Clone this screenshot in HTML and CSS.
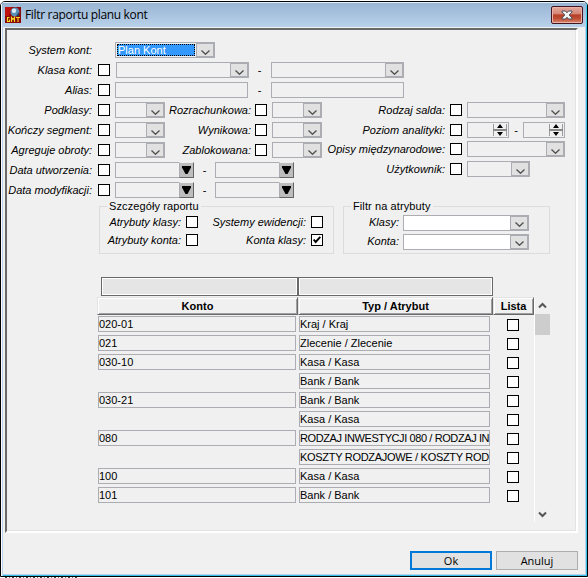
FILE: index.html
```html
<!DOCTYPE html>
<html lang="pl">
<head>
<meta charset="utf-8">
<title>Filtr raportu planu kont</title>
<link rel="stylesheet" href="styles.css">
</head>
<body>
<svg class="defs" width="0" height="0">
  <symbol id="chev" viewBox="0 0 9 5"><path d="M.5 .5 4.5 4.3 8.5 .5" fill="none" stroke="#505050" stroke-width="1.3"/></symbol>
  <symbol id="tri" viewBox="0 0 9 8"><path d="M0 0H9V1.500L5.500 8H3.500L0 1.500Z" fill="#000"/></symbol>
  <symbol id="spin" viewBox="0 0 16 14"><path d="M1.5 1V13M14.5 1V13" stroke="#9a9a9a"/><path d="M1 7H15" stroke="#888" stroke-width="2"/><path d="M8 1 11 5H5ZM8 13 5 9H11Z" fill="#000"/></symbol>
</svg>
<div class="window">
  <header class="titlebar">
    <svg class="app-icon" width="16" height="16" viewBox="0 0 16 16">
      <rect width="16" height="16" fill="#8c0808"/><path d="M0 0H7L4 9H0Z" fill="#c01010"/>
      <circle cx="10" cy="5" r="4.5" fill="#5c8fb8"/><circle cx="9" cy="3.8" r="2.2" fill="#d8ecf6"/><path d="M11 9 14 5V9Z" fill="#24455e"/>
      <path d="M4.5 10.5H2.5V14.5H4.5V12.5M6.5 15V10.5L8 12.5 9.500 10.500V15M11 10.500H15M13 10.500V15" fill="none" stroke="#f4dc20" stroke-width="1.100"/>
    </svg>
    <h1>Filtr raportu planu kont</h1>
    <button class="close" aria-label="Zamknij"><svg width="12" height="10" viewBox="0 0 12 10"><path d="M1 1H4.500L6 2.800 7.500 1H11V2L8.200 5 11 8V9H7.500L6 7.200 4.500 9H1V8L3.800 5 1 2Z" fill="#f4f4f4" stroke="#4b4f60"/></svg></button>
  </header>
  <main class="panel">
    <form class="filters">
      <div class="row"><label>System kont:</label><i></i>
        <div class="wide"><span class="combo w100"><span class="selected">Plan Kont</span><b><svg><use href="#chev"/></svg></b></span></div></div>
      <div class="row"><label>Klasa kont:</label><i class="check"></i>
        <div class="wide"><span class="combo w133 shift"><b><svg><use href="#chev"/></svg></b></span><em>-</em><span class="combo w133"><b><svg><use href="#chev"/></svg></b></span></div></div>
      <div class="row"><label>Alias:</label><i class="check"></i>
        <div class="wide"><span class="input w133"></span><em>-</em><span class="input w133"></span></div></div>
      <div class="row"><label>Podklasy:</label><i class="check"></i><span class="combo"><b><svg><use href="#chev"/></svg></b></span>
        <label>Rozrachunkowa:</label><i class="check"></i><span class="combo"><b><svg><use href="#chev"/></svg></b></span>
        <label>Rodzaj salda:</label><i class="check"></i><span class="combo w98"><b><svg><use href="#chev"/></svg></b></span></div>
      <div class="row"><label>Kończy segment:</label><i class="check"></i><span class="combo"><b><svg><use href="#chev"/></svg></b></span>
        <label>Wynikowa:</label><i class="check"></i><span class="combo"><b><svg><use href="#chev"/></svg></b></span>
        <label>Poziom analityki:</label><i class="check"></i><div class="range"><span class="input"><svg><use href="#spin"/></svg></span><em>-</em><span class="input"><svg><use href="#spin"/></svg></span></div></div>
      <div class="row"><label>Agreguje obroty:</label><i class="check"></i><span class="combo"><b><svg><use href="#chev"/></svg></b></span>
        <label>Zablokowana:</label><i class="check"></i><span class="combo"><b><svg><use href="#chev"/></svg></b></span>
        <label class="up">Opisy międzynarodowe:</label><i class="check up"></i><span class="combo w98 up"><b><svg><use href="#chev"/></svg></b></span></div>
      <div class="row"><label>Data utworzenia:</label><i class="check"></i>
        <div class="dates"><span class="date"><span class="input"></span><b><svg><use href="#tri"/></svg></b></span><em>-</em><span class="date"><span class="input"></span><b><svg><use href="#tri"/></svg></b></span></div>
        <label class="up user">Użytkownik:</label><i class="check up"></i><span class="combo w63 up"><b><svg><use href="#chev"/></svg></b></span></div>
      <div class="row"><label>Data modyfikacji:</label><i class="check"></i>
        <div class="dates"><span class="date"><span class="input"></span><b><svg><use href="#tri"/></svg></b></span><em>-</em><span class="date"><span class="input"></span><b><svg><use href="#tri"/></svg></b></span></div></div>
    </form>
    <div class="groups">
      <section class="group details">
        <h2>Szczegóły raportu</h2>
        <label>Atrybuty klasy:</label><i class="check"></i><label>Systemy ewidencji:</label><i class="check"></i>
        <label>Atrybuty konta:</label><i class="check"></i><label>Konta klasy:</label><i class="check"><svg width="8" height="8" viewBox="0 0 8 8"><path d="M.7 3.500 2.700 6 7.300 .8" fill="none" stroke="#000" stroke-width="1.900"/></svg></i>
      </section>
      <section class="group attrs">
        <h2>Filtr na atrybuty</h2>
        <label>Klasy:</label><span class="combo white"><b><svg><use href="#chev"/></svg></b></span>
        <label>Konta:</label><span class="combo white"><b><svg><use href="#chev"/></svg></b></span>
      </section>
    </div>
    <div class="grid-area">
      <div class="table">
        <div class="search"><span></span><span></span></div>
        <div class="head"><span>Konto</span><span>Typ / Atrybut</span><span>Lista</span></div>
        <div class="line"><span>020-01</span><span>Kraj / Kraj</span><i class="check"></i></div>
        <div class="line"><span>021</span><span>Zlecenie / Zlecenie</span><i class="check"></i></div>
        <div class="line"><span>030-10</span><span>Kasa / Kasa</span><i class="check"></i></div>
        <div class="line"><span class="none"></span><span>Bank / Bank</span><i class="check"></i></div>
        <div class="line"><span>030-21</span><span>Bank / Bank</span><i class="check"></i></div>
        <div class="line"><span class="none"></span><span>Kasa / Kasa</span><i class="check"></i></div>
        <div class="line"><span>080</span><span class="caps">RODZAJ INWESTYCJI 080 / RODZAJ IN</span><i class="check"></i></div>
        <div class="line"><span class="none"></span><span class="caps">KOSZTY RODZAJOWE / KOSZTY ROD</span><i class="check"></i></div>
        <div class="line"><span>100</span><span>Kasa / Kasa</span><i class="check"></i></div>
        <div class="line"><span>101</span><span>Bank / Bank</span><i class="check"></i></div>
      </div>
      <div class="scrollbar">
        <svg width="9" height="7" viewBox="0 0 9 7"><path d="M1 5.500 4.500 2 8 5.500" fill="none" stroke="#555" stroke-width="2"/></svg>
        <div class="thumb"></div>
        <svg width="9" height="7" viewBox="0 0 9 7"><path d="M1 1.500 4.500 5 8 1.500" fill="none" stroke="#555" stroke-width="2"/></svg>
      </div>
    </div>
  </main>
  <footer class="actions"><button class="default">Ok</button><button>Anuluj</button></footer>
</div>
<div class="behind"></div>
</body>
</html>
```

FILE: styles.css
```css
* { box-sizing: border-box; }
body { margin: 0; width: 588px; height: 578px; overflow: hidden; background: #fff; font: 11px/13px "Liberation Sans", Arial, sans-serif; color: #000; }
.defs { display: block; }
svg { display: block; flex: none; }
h1, h2 { margin: 0; font-weight: normal; }
.window { width: 588px; height: 576px; margin-top: 1px; border: 1px solid #000; border-radius: 5px 5px 0 0; background: #f0f0f0; box-shadow: inset 1px 0 #fff, inset 2px 0 #b9d1ea, inset -1px -1px #35bfe5, inset -2px -2px #b9d1ea; overflow: hidden; }
.titlebar { display: flex; align-items: center; height: 25px; padding: 0 4px; background: linear-gradient(#98b4d2, #b9d1ea); box-shadow: inset 0 1px #e4f1fa, inset 1px 0 #fff, inset -1px 0 #35d0ee; }
.app-icon { margin-top: 1px; }
.titlebar h1 { flex: 1; margin-left: 4px; font: 12px/16px "Open Sans", sans-serif; letter-spacing: -.33px; }
.close { display: flex; align-items: center; justify-content: center; width: 32px; height: 18px; margin-top: 1px; padding: 0; border: 1px solid #431422; border-radius: 2px; background: linear-gradient(#e4a99e, #d38373 45%, #b83f26 48%, #bd4a30 70%, #d98a70); box-shadow: inset 0 0 0 1px #e9b3a8; }
.panel { width: 573px; height: 505px; margin: 1px 0 0 4px; padding: 10px 0 0; border: 2px solid; border-color: #696969 #fff #fff #696969; box-shadow: inset -1px -1px #e3e3e3; }
.row { display: grid; grid-template-columns: 85px 23px 50px 86px 21px 50px 123px 22px 100px; height: 20px; align-items: center; }
label { text-align: right; font-style: italic; white-space: nowrap; }
.up { position: relative; top: -1px; }
.check { display: flex; align-items: center; justify-content: center; width: 12px; height: 12px; margin-left: 6px; border: 1px solid #000; background: #fff; }
.row label:nth-of-type(2) + .check { margin-left: 4px; }
.row label:nth-of-type(3) + .check, .row .user + .check { margin-left: 5px !important; }
.combo, .input { display: flex; justify-content: flex-end; width: 50px; height: 16px; border: 1px solid #abadb3; background: #f0f0f0; }
.combo b { display: flex; align-items: center; justify-content: center; width: 18px; flex: none; border: 1px solid #abadb3; background: #e1e1e1; }
.combo b svg { width: 9px; height: 5px; margin-top: 4px; }
.white { width: 126px; background: #fff; }
.w100 { width: 100px; }
.w133 { width: 133px; }
.w98 { width: 98px; }
.w63 { width: 63px; }
.selected { flex: 1; margin: 1px; padding-left: 0; background: #3399ff; color: #fff; border: 1px dotted #000; line-height: 10px; }
.wide, .dates, .range, .date { display: flex; align-items: center; }
.wide { grid-column: 3 / span 7; }
.wide em { width: 23px; }
.shift { margin: 0 -1px 0 1px; }
em { font-style: normal; text-align: center; }
.dates { grid-column: 3 / span 4; }
.date .input { width: 64px; border-right: 0; }
.date b { display: flex; align-items: center; justify-content: center; width: 15px; height: 16px; background: #bdbdbd; border: 1px solid; border-color: #eee #666 #666 #abadb3; }
.date b svg { width: 9px; height: 8px; }
.dates em { width: 21px; }
.range .input { width: 42px; }
.range .input svg { width: 16px; height: 14px; }
.range em { width: 14px; }
.groups { display: flex; gap: 9px; margin: 6px 0 0 92px; }
.group { position: relative; display: grid; height: 48px; border: 1px solid #dcdcdc; align-items: center; }
.group h2 { position: absolute; top: -7px; left: 7px; padding: 0 2px; font: 11px/13px "Liberation Sans", Arial, sans-serif; letter-spacing: .1px; background: #f0f0f0; }
.details { width: 235px; grid-template: 18px 18px / 81px 23px 102px 23px; padding-top: 6px; }
.details .check { margin-left: 5px; }
.attrs { width: 207px; grid-template: 19px 19px / 55px 130px; column-gap: 4px; padding-top: 6px; }
.grid-area { display: flex; margin: 23px 0 0 90px; height: 245px; }
.table { width: 437px; }
.search { display: flex; height: 19px; margin-left: 4px; }
.search span { width: 197px; height: 19px; border: 1px solid #696969; background: #e5e5e5; box-shadow: inset 0 0 0 1px #fff; }
.search span + span { width: 195px; }
.head { display: flex; height: 18px; margin-top: 1px; }
.head span { width: 201px; height: 18px; border: 1px solid; border-color: #e3e3e3 #696969 #696969 #e3e3e3; box-shadow: inset 1px 1px #fff, inset -1px -1px #a0a0a0; font-weight: bold; line-height: 17px; text-align: center; }
.head span:nth-child(2) { width: 195px; }
.head span:nth-child(3) { width: 41px; }
.line { display: grid; grid-template-columns: 198px 191px 12px; column-gap: 3px; height: 19px; padding-left: 1px; align-items: start; }
.head + .line { margin-top: 1px; }
.line span { height: 16px; border: 1px solid #abadb3; line-height: 14px; white-space: nowrap; }
.line .none { border-color: transparent; }
.line .caps { letter-spacing: -.4px; }
.line .none + .caps { letter-spacing: -.3px; }
.line .check { margin: 3px 0 0 14px; }
.scrollbar { display: flex; flex-direction: column; align-items: center; width: 16px; height: 224px; margin-top: 21px; border-left: 1px solid #fff; padding: 4px 0 4px; }
.scrollbar .thumb { width: 15px; height: 21px; margin: 5px 0 auto; background: #cdcdcd; }
.actions { display: flex; justify-content: flex-end; gap: 4px; padding: 18px 9px 0 0; }
.actions button { width: 82px; height: 19px; padding: 0; border: 1px solid #adadad; background: #e1e1e1; font: 11px/15px "Open Sans", sans-serif; }
.actions .default { border: 2px solid #0078d7; line-height: 13px; }
.behind { width: 72px; height: 1px; margin-left: 5px; background: repeating-linear-gradient(90deg, #444 0 2px, #fff 2px 4px, #777 4px 5px, #fff 5px 7px); }
```
